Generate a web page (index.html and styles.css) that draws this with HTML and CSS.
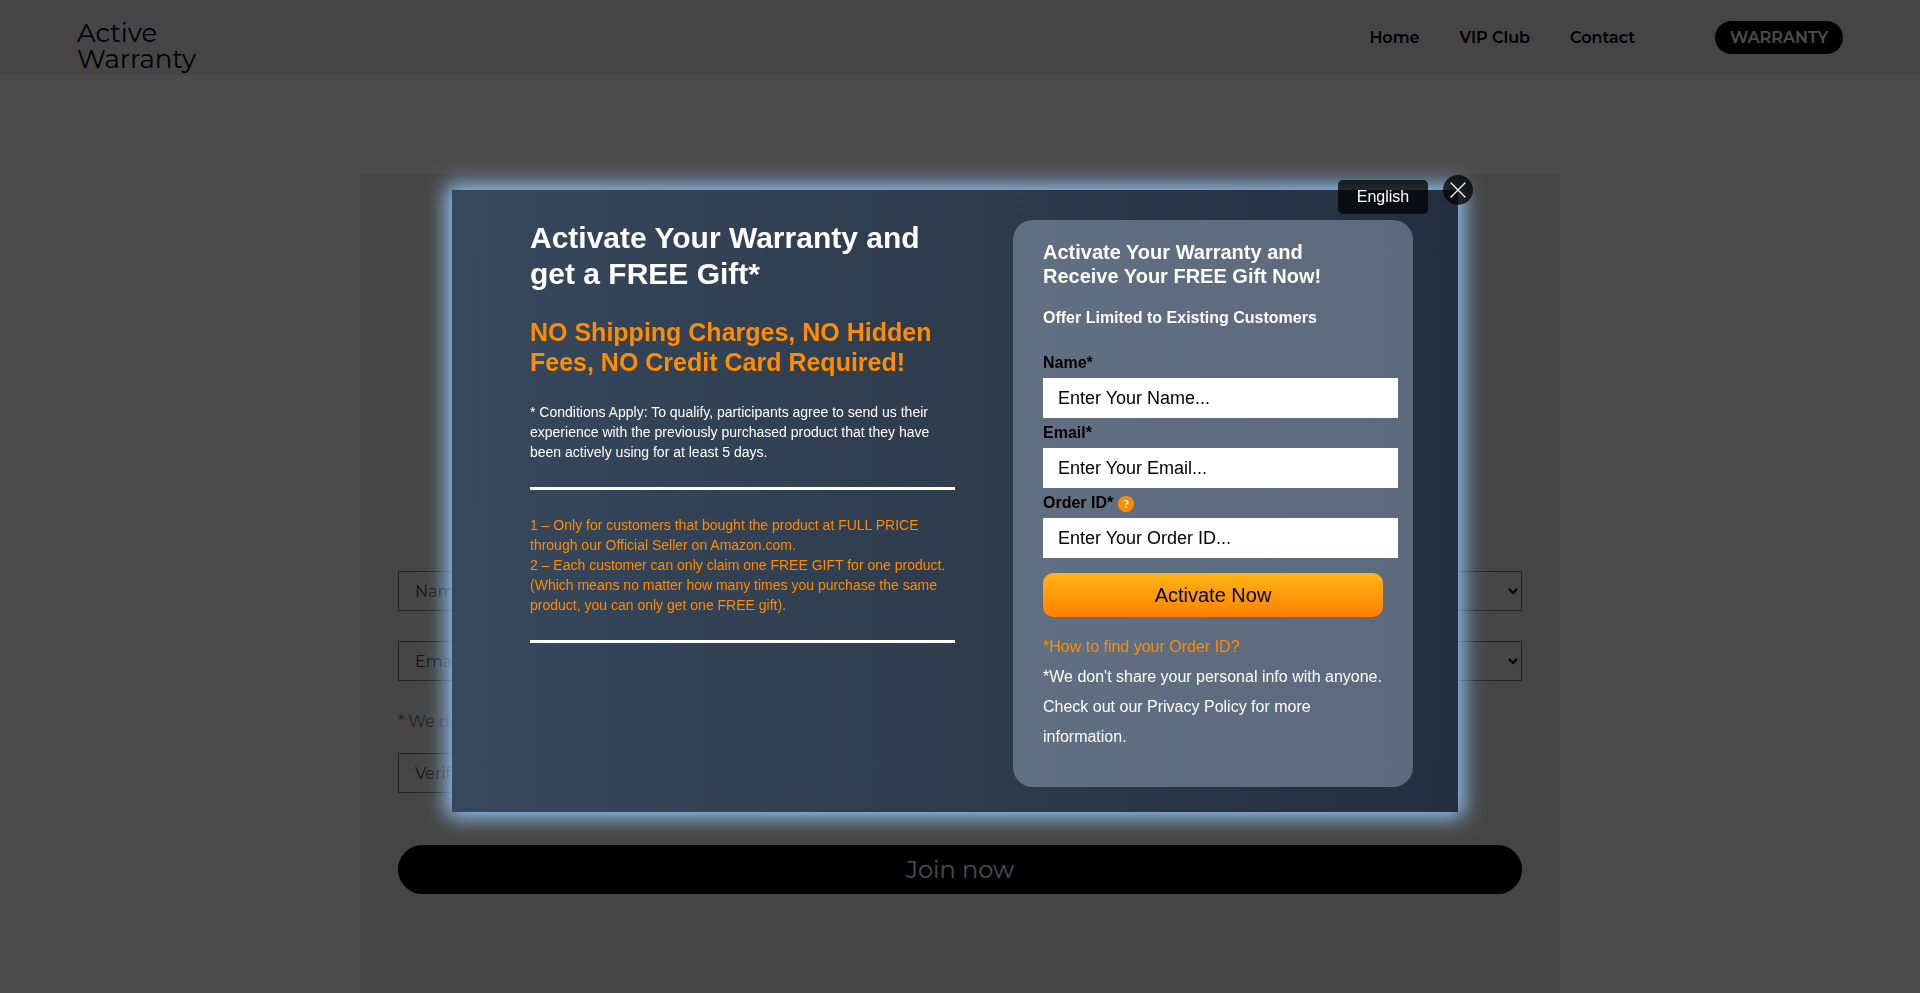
FILE: index.html
```html
<!DOCTYPE html>
<html lang="en">
<head>
<meta charset="utf-8">
<title>Active Warranty</title>
<link rel="stylesheet" href="styles.css">
</head>
<body>
<header class="site-header">
  <a class="logo" href="#">Active<br>Warranty</a>
  <nav class="nav">
    <a class="nav-link" href="#">Home</a>
    <a class="nav-link" href="#">VIP Club</a>
    <a class="nav-link" href="#">Contact</a>
    <a class="nav-pill" href="#">WARRANTY</a>
  </nav>
</header>
<main class="section">
  <form class="join">
    <div class="join-grid">
      <input class="join-field" type="text" aria-label="Name" placeholder="Name">
      <select class="join-field" aria-label="Country"><option></option></select>
      <input class="join-field" type="email" aria-label="Email" placeholder="Email">
      <select class="join-field" aria-label="Product"><option></option></select>
    </div>
    <p class="join-note">* We don't share</p>
    <input class="join-field verify" type="text" aria-label="Verification" placeholder="Verification">
    <button class="join-button" type="button">Join now</button>
  </form>
</main>
<div class="overlay">
  <div class="modal" role="dialog" aria-modal="true" aria-labelledby="offer-title">
    <button class="language" type="button">English</button>
    <button class="close" type="button" aria-label="Close">
      <svg class="close-icon" viewBox="0 0 16 16"><path d="M1 1L15 15M15 1L1 15" fill="none" stroke="#fff" stroke-width="1.2" stroke-linecap="round"/></svg>
    </button>
    <section class="offer">
      <h1 class="offer-title" id="offer-title">Activate Your Warranty and get a FREE Gift*</h1>
      <h2 class="offer-subtitle">NO Shipping Charges, NO Hidden Fees, NO Credit Card Required!</h2>
      <p class="terms">* Conditions Apply: To qualify, participants agree to send us their experience with the previously purchased product that they have been actively using for at least 5 days.</p>
      <hr class="rule">
      <p class="terms terms-accent">1 – Only for customers that bought the product at FULL PRICE through our Official Seller on Amazon.com.<br>2 – Each customer can only claim one FREE GIFT for one product. (Which means no matter how many times you purchase the same product, you can only get one FREE gift).</p>
      <hr class="rule">
    </section>
    <form class="card">
      <h3 class="card-title">Activate Your Warranty and Receive Your FREE Gift Now!</h3>
      <h4 class="card-subtitle">Offer Limited to Existing Customers</h4>
      <label class="label" for="name">Name*</label>
      <input class="field" id="name" type="text" placeholder="Enter Your Name...">
      <label class="label" for="email">Email*</label>
      <input class="field" id="email" type="email" placeholder="Enter Your Email...">
      <label class="label" for="order">Order ID* <span class="help">?</span></label>
      <input class="field" id="order" type="text" placeholder="Enter Your Order ID...">
      <button class="activate" type="button">Activate Now</button>
      <a class="find-link" href="#">*How to find your Order ID?</a>
      <p class="privacy">*We don't share your personal info with anyone. Check out our <a class="privacy-link" href="#">Privacy Policy</a> for more information.</p>
    </form>
  </div>
</div>
</body>
</html>
```
FILE: styles.css
```css
* { box-sizing: border-box; }

body {
  margin: 0;
  height: 100vh;
  display: flex;
  flex-direction: column;
  overflow: hidden;
  background: #fafafa;
  font-family: Montserrat, Inter, sans-serif;
  color: #000;
}

a { color: inherit; text-decoration: none; }
h1, h2, h3, h4, p { margin: 0; }

.site-header {
  flex: none;
  display: flex;
  justify-content: space-between;
  align-items: flex-start;
  height: 75px;
  padding: 20px 77px 0;
  background: #e8e8e8;
}

.logo { font-size: 26px; line-height: 26px; font-weight: 400; }

.nav {
  display: flex;
  align-items: center;
  gap: 40px;
  padding-top: 1px;
  font-size: 16px;
  font-weight: 600;
}

.nav-pill {
  margin-left: 40px;
  padding: 0 15px;
  line-height: 33px;
  border-radius: 17px;
  background: #000;
  color: #fff;
}

.section {
  flex: 1 0 auto;
  width: 1200px;
  max-width: 100%;
  margin: 99px auto 0;
  padding: 397px 38px 60px;
  background: #e6e6e6;
}

.join { display: flex; flex-direction: column; }

.join-grid {
  display: grid;
  grid-template-columns: 1fr 1fr;
  gap: 30px;
}

.join-field {
  width: 100%;
  height: 40px;
  padding: 0 16px;
  border: 1px solid #767676;
  border-radius: 0;
  background: transparent;
  font: 400 16px/20px Montserrat, Inter, sans-serif;
  color: #000;
}

select.join-field { padding: 0; }
.join-field::placeholder { color: #484848; }

.join-note {
  margin: 31px 0 21px;
  font-size: 16px;
  line-height: 20px;
  font-weight: 400;
  color: #757575;
}

.verify { width: 50%; }

.join-button {
  height: 49px;
  margin-top: 52px;
  padding: 0;
  border: 0;
  border-radius: 25px;
  background: #000;
  color: #fff;
  font: 400 24px/30px Montserrat, Inter, sans-serif;
}

.overlay {
  position: fixed;
  inset: 0;
  display: flex;
  align-items: center;
  justify-content: center;
  padding: 9px 10px 0 0;
  background: rgba(0, 0, 0, .7);
  font-family: "Liberation Sans", Arial, sans-serif;
}

.modal {
  position: relative;
  display: flex;
  justify-content: space-between;
  align-items: flex-start;
  width: 1006px;
  max-width: 100%;
  padding: 30px 45px 25px 78px;
  background: linear-gradient(90deg, #37485e, #2e3c4c 50%, #242f40);
  box-shadow: 0 0 20px 5px #95cbff;
  color: #fff;
}

.language,
.close {
  position: absolute;
  border: 0;
  background: rgba(0, 0, 0, .75);
  color: #fff;
}

.language {
  top: -10px;
  right: 30px;
  width: 90px;
  height: 34px;
  padding: 0;
  border-radius: 5px;
  font: 16px/34px "Liberation Sans", Arial, sans-serif;
}

.close {
  top: -15px;
  right: -15px;
  display: flex;
  align-items: center;
  justify-content: center;
  width: 30px;
  height: 30px;
  padding: 0;
  border-radius: 50%;
}

.close-icon { width: 16px; height: 16px; }

.offer {
  display: flex;
  flex-direction: column;
  gap: 25px;
  width: 425px;
}

.offer-title { font-size: 30px; line-height: 36px; }
.offer-subtitle { font-size: 25px; line-height: 30px; color: #ff8c00; }
.terms { font-size: 14px; line-height: 20px; }
.terms-accent { color: #ff8c00; }
.rule { width: 100%; height: 3px; margin: 0; border: 0; background: #fff; }

.card {
  display: flex;
  flex-direction: column;
  width: 400px;
  padding: 20px 30px 35px;
  border-radius: 20px;
  background: rgba(150, 163, 185, .5);
  font-size: 16px;
  line-height: 30px;
}

.card-title { font-size: 20px; line-height: 24px; }
.card-subtitle { margin: 20px 0; font-size: 16px; line-height: 20px; }

.label {
  display: flex;
  align-items: center;
  gap: 5px;
  height: 30px;
  color: #000;
  font-weight: 700;
}

.help {
  width: 16px;
  height: 16px;
  margin-top: 2px;
  border-radius: 50%;
  background: #ff8c00;
  color: #fff;
  font: 700 12px/16px "Liberation Serif", serif;
  text-align: center;
}

.field {
  height: 40px;
  margin-right: -15px;
  padding: 0 15px;
  border: 0;
  border-radius: 0;
  background: #fff;
  color: #000;
  font: 18px/20px "Liberation Sans", Arial, sans-serif;
}

.field::placeholder { color: #000; opacity: 1; }

.activate {
  height: 44px;
  margin: 15px 0;
  border: 0;
  border-radius: 10px;
  background: linear-gradient(#ffb516, #ff8000);
  color: #000;
  font: 20px/24px "Liberation Sans", Arial, sans-serif;
}

.find-link { color: #ff8c00; }
```
